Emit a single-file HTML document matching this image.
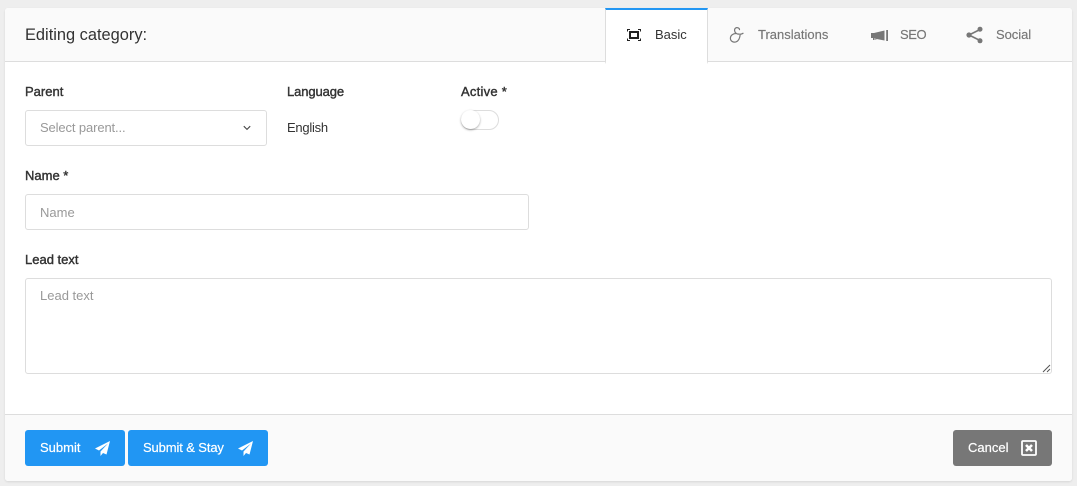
<!DOCTYPE html>
<html>
<head>
<meta charset="utf-8">
<style>
html,body{margin:0;padding:0;width:1077px;height:486px;overflow:hidden;background:#eeeeee;font-family:"Liberation Sans",sans-serif;font-size:13px;color:#333}
.a{position:absolute;white-space:nowrap;line-height:16px;font-size:13px}
.card{position:absolute;left:5px;top:8px;width:1067px;height:473px;background:#fff;border-radius:3px;box-shadow:0 1px 2px rgba(0,0,0,.1)}
.head{position:absolute;left:5px;top:8px;width:1067px;height:53px;background:#fafafa;border-bottom:1px solid #ddd;border-radius:3px 3px 0 0}
.foot{position:absolute;left:5px;top:414px;width:1067px;height:66px;background:#fafafa;border-top:1px solid #ddd;border-radius:0 0 3px 3px}
.tab{position:absolute;left:605px;top:8px;width:101px;height:52px;background:#fff;border-left:1px solid #ddd;border-right:1px solid #ddd;border-top:2px solid #2196f3;border-bottom:2px solid #fff}
.box{position:absolute;background:#fff;border:1px solid #ddd;border-radius:3px;box-sizing:border-box}
.lab{color:#333;-webkit-text-stroke:.4px #333}
.ph{color:#999}
.tb{color:#777;-webkit-text-stroke:.15px #777}
.bt{color:#fff;-webkit-text-stroke:.2px #fff}
.btn{position:absolute;top:430px;height:36px;border-radius:3px;background:#2196f3}
svg{position:absolute;overflow:visible}
</style>
</head>
<body>
<div class="card"></div>
<div class="head"></div>
<div class="foot"></div>
<div class="tab"></div>

<div class="a" style="left:25px;top:25px;font-size:16.4px;line-height:20px;color:#333">Editing category:</div>

<svg style="left:627px;top:29px" width="14" height="12" viewBox="0 0 14 12"><path d="M.5 2.500V.5H3M11 .5H13.500V2.500M13.500 9.500V11.500H11M3 11.500H.5V9.500" fill="none" stroke="#222" stroke-width="1"/><rect x="3" y="3" width="8" height="6" fill="none" stroke="#222" stroke-width="2"/></svg>
<div class="a" style="left:655px;top:27px;color:#333">Basic</div>

<svg style="left:729px;top:26px" width="15" height="18" viewBox="0 0 15 18"><path d="M10.500 3.600C10.500 1.800 7.800 1 6.400 2.200C5 3.500 5.400 6.300 7.400 7.500C8.200 8 9.200 8.200 10 8M7.400 7.500C4.200 7.300 1.400 9.400 1.400 12.300C1.400 15.400 4.600 16.800 7.200 15.800C10 14.700 11 11 11.200 8.200C12 8.200 13 7.900 14 7.300" fill="none" stroke="#777" stroke-width="1.200" stroke-linecap="round"/></svg>
<div class="a tb" style="left:758px;top:27px">Translations</div>

<svg style="left:871px;top:30px" width="17" height="11" viewBox="0 0 17 11"><path d="M0 3H3L13.500 .5V10.500L3 8.500V9.500H5.500V10H2V8H0Z" fill="#777"/><rect x="15.200" y="0" width="1.800" height="11" fill="#777"/></svg>
<div class="a tb" style="left:900px;top:27px;letter-spacing:-.4px">SEO</div>

<svg style="left:966px;top:26px" width="17" height="18" viewBox="0 0 17 18"><path d="M14 3.500L3 9L14 14.500" fill="none" stroke="#777" stroke-width="1.600"/><circle cx="14" cy="3.200" r="2.500" fill="#777"/><circle cx="3" cy="9" r="2.600" fill="#777"/><circle cx="14" cy="14.800" r="2.500" fill="#777"/></svg>
<div class="a tb" style="left:996px;top:27px;letter-spacing:-.05px">Social</div>

<div class="a lab" style="left:25px;top:84px">Parent</div>
<div class="box" style="left:25px;top:110px;width:242px;height:36px"></div>
<div class="a ph" style="left:40px;top:120px;letter-spacing:-.12px">Select parent...</div>
<svg style="left:243px;top:125px" width="8" height="6" viewBox="0 0 8 6"><path d="M.8 1.200L4 4.400L7.200 1.200" fill="none" stroke="#444" stroke-width="1.100"/></svg>

<div class="a lab" style="left:287px;top:84px;letter-spacing:-.1px">Language</div>
<div class="a" style="left:287px;top:120px;color:#333;letter-spacing:-.25px">English</div>

<div class="a lab" style="left:461px;top:84px;letter-spacing:.25px">Active *</div>
<div class="box" style="left:461px;top:110px;width:38px;height:20px;border-radius:10px"></div>
<div style="position:absolute;left:461px;top:110px;width:19px;height:19px;border-radius:50%;background:#fff;box-shadow:0 1px 2px rgba(0,0,0,.35)"></div>

<div class="a lab" style="left:25px;top:168px">Name *</div>
<div class="box" style="left:25px;top:194px;width:504px;height:36px"></div>
<div class="a ph" style="left:40px;top:205px">Name</div>

<div class="a lab" style="left:25px;top:252px">Lead text</div>
<div class="box" style="left:25px;top:278px;width:1027px;height:96px"></div>
<div class="a ph" style="left:40px;top:288px">Lead text</div>
<svg style="left:1042px;top:364px" width="9" height="9" viewBox="0 0 9 9"><path d="M1 8L8 1M5 8L8 5" stroke="#555" stroke-width="1" fill="none"/></svg>

<div class="btn" style="left:25px;width:100px"></div>
<div class="a bt" style="left:40px;top:440px">Submit</div>
<svg style="left:95px;top:441px" width="15" height="15" viewBox="0 0 15 15"><path d="M15 0L0 7.500L4 9.500L13 2.500L5.500 10.500V15L8 12L11.500 13.500Z" fill="#fff"/></svg>

<div class="btn" style="left:128px;width:140px"></div>
<div class="a bt" style="left:143px;top:440px;letter-spacing:-.12px">Submit &amp; Stay</div>
<svg style="left:238px;top:441px" width="15" height="15" viewBox="0 0 15 15"><path d="M15 0L0 7.500L4 9.500L13 2.500L5.500 10.500V15L8 12L11.500 13.500Z" fill="#fff"/></svg>

<div class="btn" style="left:953px;width:99px;background:#777"></div>
<div class="a bt" style="left:968px;top:440px">Cancel</div>
<svg style="left:1021px;top:440px" width="16" height="16" viewBox="0 0 16 16"><rect x="1" y="1" width="14" height="14" rx="1" fill="none" stroke="#fff" stroke-width="1.800"/><path d="M5 5L11 11M11 5L5 11" stroke="#fff" stroke-width="2.600" fill="none"/></svg>
</body>
</html>
